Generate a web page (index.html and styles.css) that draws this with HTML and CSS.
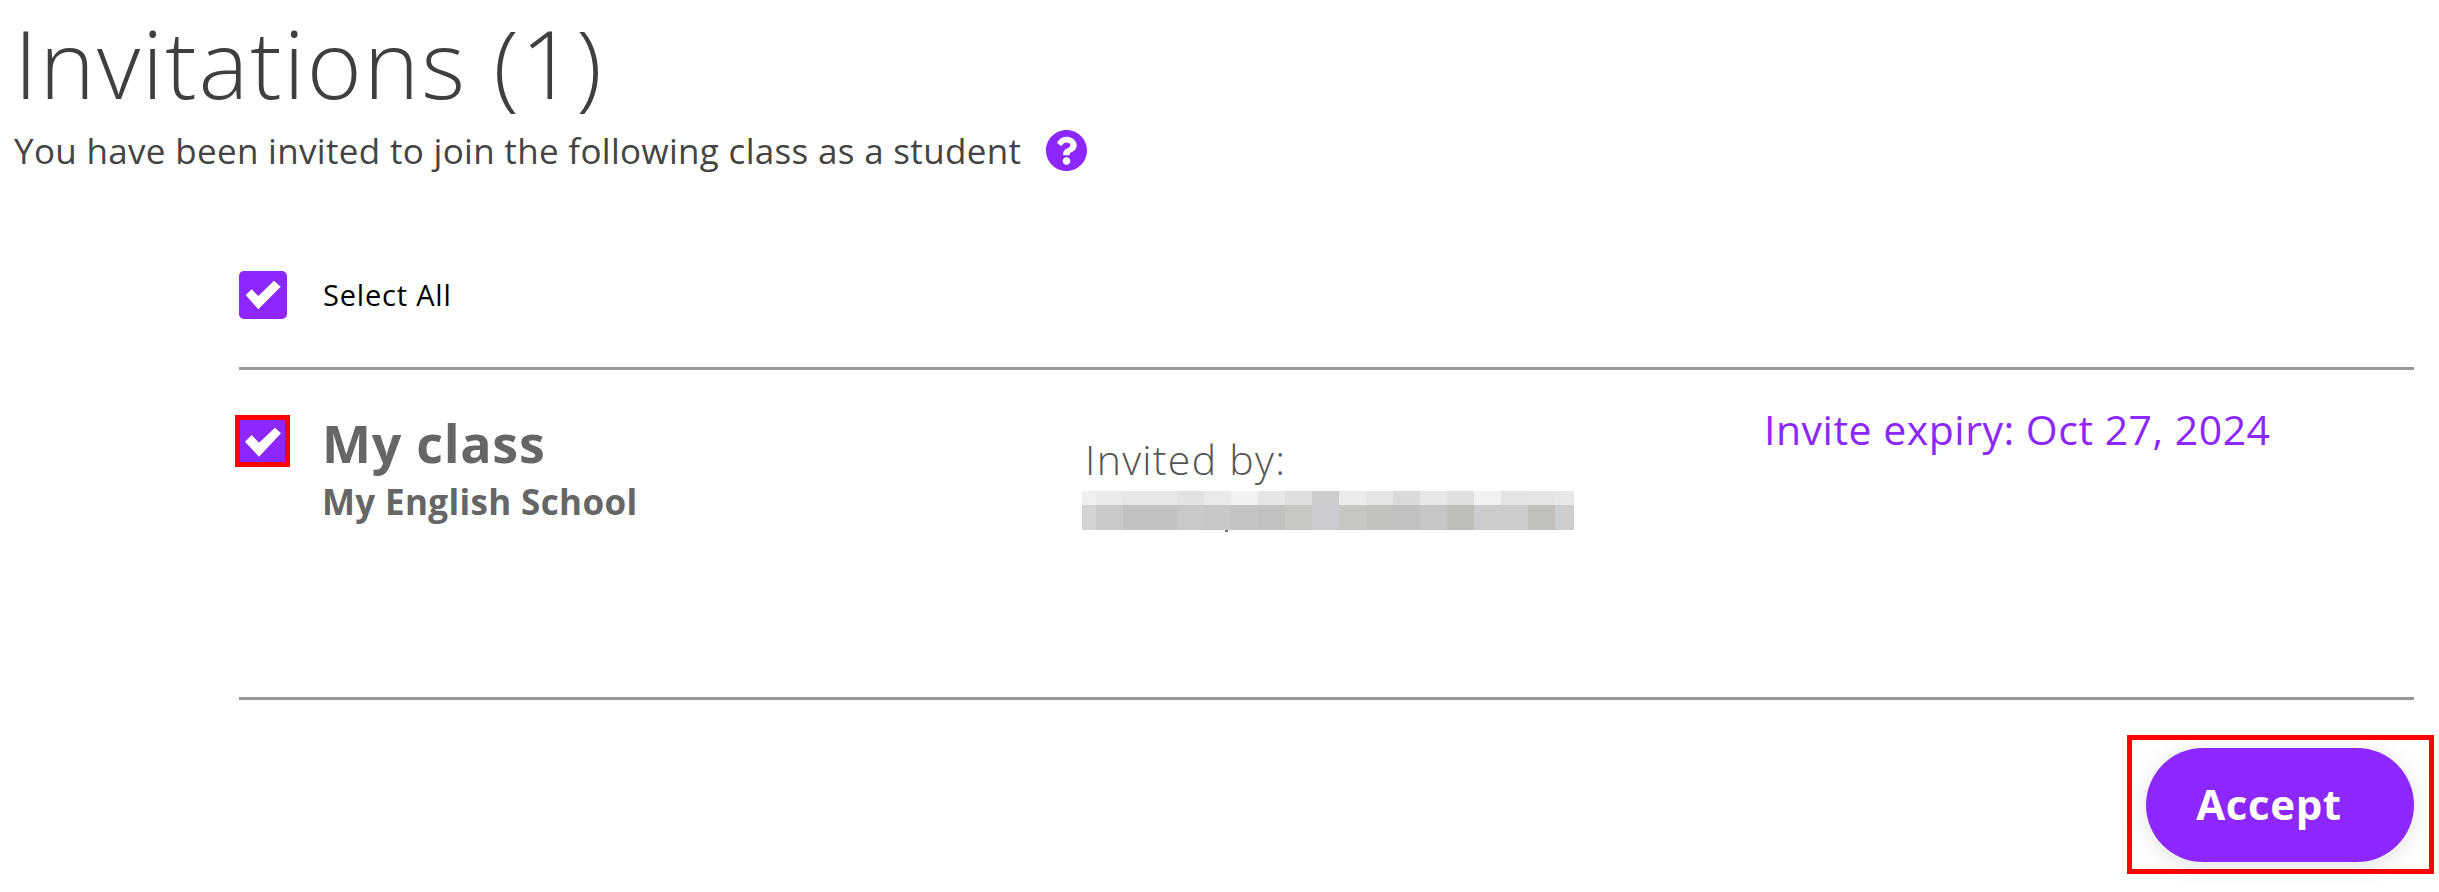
FILE: index.html
```html
<!DOCTYPE html>
<html lang="en">
<head>
<meta charset="utf-8">
<title>Invitations</title>
<link rel="stylesheet" href="styles.css">
</head>
<body>
<header class="head">
  <h1 class="title">Invitations (1)</h1>
  <div class="sub">
    <span class="sub-text">You have been invited to join the following class as a student</span>
    <svg class="help" viewBox="8 8 496 496"><path fill="#8c28ff" d="M504 256c0 136.997-111.043 248-248 248S8 392.997 8 256C8 119.083 119.043 8 256 8s248 111.083 248 248zM262.655 90c-54.497 0-89.255 22.957-116.549 63.758-3.536 5.286-2.353 12.415 2.715 16.258l34.699 26.31c5.205 3.947 12.621 3.008 16.665-2.122 17.864-22.658 30.113-35.797 57.303-35.797 20.429 0 45.698 13.148 45.698 32.958 0 14.976-12.363 22.667-32.534 33.976C247.128 238.528 216 254.941 216 296v4c0 6.627 5.373 12 12 12h56c6.627 0 12-5.373 12-12v-1.333c0-28.462 83.186-29.647 83.186-106.667 0-58.002-60.165-102-116.531-102zM256 338c-25.365 0-46 20.635-46 46 0 25.364 20.635 46 46 46s46-20.636 46-46c0-25.365-20.635-46-46-46z"/></svg>
  </div>
</header>
<main class="list">
  <div class="select-all">
    <span class="check">
      <svg width="48" height="48" viewBox="0 0 48 48"><polygon fill="#fff" points="6.7,24 12.7,18.3 19.3,25 35,9.7 41.7,15.7 19.3,38.3"/></svg>
    </span>
    <span class="select-label">Select All</span>
  </div>
  <div class="row">
    <div class="flag">
      <span class="check-inner">
        <svg width="45" height="42" viewBox="0 0 45 42"><polygon fill="#fff" points="5,21.7 11.7,15 19,22.7 35,7.7 41,13.3 19,36.7"/></svg>
      </span>
    </div>
    <div class="names">
      <div class="class-name">My class</div>
      <div class="school">My English School</div>
    </div>
    <div class="inviter">
      <div class="invited-by">Invited by:</div>
      <svg class="blur" width="492" height="41" viewBox="0 0 492 41" shape-rendering="crispEdges">
        <g>
          <rect x="0" width="14" height="14" fill="#f0efed"/><rect x="14" width="27" height="14" fill="#e9ebea"/><rect x="41" width="27" height="14" fill="#e7e8e8"/><rect x="68" width="27" height="14" fill="#e7e9e8"/><rect x="95" width="27" height="14" fill="#e2e2e2"/><rect x="122" width="27" height="14" fill="#e9e9e9"/><rect x="149" width="27" height="14" fill="#f2f2f2"/><rect x="176" width="27" height="14" fill="#e6e6e6"/><rect x="203" width="27" height="14" fill="#dedede"/><rect x="230" width="27" height="14" fill="#cbcdcc"/><rect x="257" width="27" height="14" fill="#ebebeb"/><rect x="284" width="27" height="14" fill="#e5e5e5"/><rect x="311" width="27" height="14" fill="#d9dbda"/><rect x="338" width="27" height="14" fill="#e8e8e8"/><rect x="365" width="27" height="14" fill="#e0e0e0"/><rect x="392" width="27" height="14" fill="#f1f1f1"/><rect x="419" width="27" height="14" fill="#e3e3e3"/><rect x="446" width="27" height="14" fill="#e5e5e5"/><rect x="473" width="19" height="14" fill="#e7e7e7"/>
        </g>
        <g>
          <rect x="0" y="14" width="14" height="25" fill="#d3d3d3"/><rect x="14" y="14" width="27" height="25" fill="#cacac8"/><rect x="41" y="14" width="27" height="25" fill="#c2c2c0"/><rect x="68" y="14" width="27" height="25" fill="#c2c2c2"/><rect x="95" y="14" width="27" height="25" fill="#c8cac9"/><rect x="122" y="14" width="27" height="25" fill="#c7c7c7"/><rect x="149" y="14" width="27" height="25" fill="#c4c3c1"/><rect x="176" y="14" width="27" height="25" fill="#c1c1c1"/><rect x="203" y="14" width="27" height="25" fill="#c7c7c4"/><rect x="230" y="14" width="27" height="25" fill="#cacbce"/><rect x="257" y="14" width="27" height="25" fill="#c6c6c3"/><rect x="284" y="14" width="27" height="25" fill="#c1c1be"/><rect x="311" y="14" width="27" height="25" fill="#c0c1c3"/><rect x="338" y="14" width="27" height="25" fill="#c6c6c6"/><rect x="365" y="14" width="27" height="25" fill="#bdbdba"/><rect x="392" y="14" width="27" height="25" fill="#cccccc"/><rect x="419" y="14" width="27" height="25" fill="#cccccc"/><rect x="446" y="14" width="27" height="25" fill="#c2c0bd"/><rect x="473" y="14" width="19" height="25" fill="#cdced0"/>
          <rect x="143" y="39" width="3" height="2" fill="#777"/>
        </g>
      </svg>
    </div>
    <div class="expiry">Invite expiry: Oct 27, 2024</div>
  </div>
  <div class="actions">
    <div class="flag-wide">
      <button class="accept" type="button">Accept</button>
    </div>
  </div>
</main>
</body>
</html>
```
FILE: styles.css
```css
html, body {
  margin: 0;
  padding: 0;
  background: #fff;
}
body {
  width: 2439px;
  height: 892px;
  overflow: hidden;
  font-family: "Open Sans", "Noto Sans", sans-serif;
}
.head {
  padding: 0 0 0 14px;
}
.title {
  margin: 0;
  font-size: 94px;
  line-height: 126px;
  font-weight: 300;
  letter-spacing: 1.9px;
  color: #3f3f3f;
  height: 118px;
}
.sub {
  display: flex;
  align-items: center;
  height: 41px;
  margin-top: 12px;
}
.sub-text {
  font-size: 35px;
  font-weight: 400;
  letter-spacing: 0.32px;
  color: #444;
  line-height: 41px;
  width: 1032px;
  white-space: nowrap;
}
.help {
  width: 41px;
  height: 41px;
  display: block;
}
.list {
  padding: 100px 5px 0 239px;
}
.select-all {
  display: flex;
  align-items: center;
  gap: 36px;
  height: 48px;
  padding-bottom: 48px;
  margin-right: 20px;
  border-bottom: 3px solid #999;
}
.check {
  width: 48px;
  height: 48px;
  background: #8c28ff;
  border-radius: 5px;
  display: block;
}
.check svg, .check-inner svg {
  display: block;
}
.select-label {
  font-size: 29px;
  letter-spacing: 0.8px;
  color: #000;
  line-height: 48px;
}
.row {
  display: flex;
  margin-right: 20px;
  border-bottom: 3px solid #999;
  padding-top: 45px;
  box-sizing: border-box;
  height: 330px;
}
.flag {
  border: 5px solid #f00;
  margin-left: -4px;
  width: 45px;
  height: 42px;
}
.check-inner {
  display: block;
  width: 45px;
  height: 42px;
  background: #8c28ff;
}
.names {
  margin-left: 32px;
  width: 760px;
}
.class-name {
  font-size: 52px;
  font-weight: 700;
  letter-spacing: 0.7px;
  color: #666;
  line-height: 56px;
}
.school {
  font-size: 35px;
  font-weight: 700;
  letter-spacing: 0.35px;
  color: #666;
  line-height: 42px;
  margin-top: 10px;
}
.inviter {
  width: 683px;
  padding-top: 20px;
}
.invited-by {
  font-size: 41px;
  font-weight: 300;
  letter-spacing: 1.3px;
  color: #555;
  line-height: 48px;
  padding-left: 3px;
}
.blur {
  display: block;
  margin-top: 8px;
}
.expiry {
  font-size: 41px;
  font-weight: 400;
  letter-spacing: 0.5px;
  color: #8c28ff;
  line-height: 48px;
  white-space: nowrap;
  margin-top: -10px;
  margin-left: -1px;
}
.actions {
  display: flex;
  justify-content: flex-end;
  padding-top: 35px;
}
.flag-wide {
  border: 5px solid #f00;
  padding: 8px 15px 7px 14px;
}
.accept {
  display: block;
  width: 268px;
  height: 114px;
  border: 0;
  padding: 0 22px 3px 0;
  border-radius: 57px;
  background: #8c28ff;
  color: #fff;
  font-family: inherit;
  font-size: 42px;
  font-weight: 700;
  letter-spacing: 0.6px;
  box-shadow: 0 4px 24px rgba(0, 0, 0, 0.12);
}
```
